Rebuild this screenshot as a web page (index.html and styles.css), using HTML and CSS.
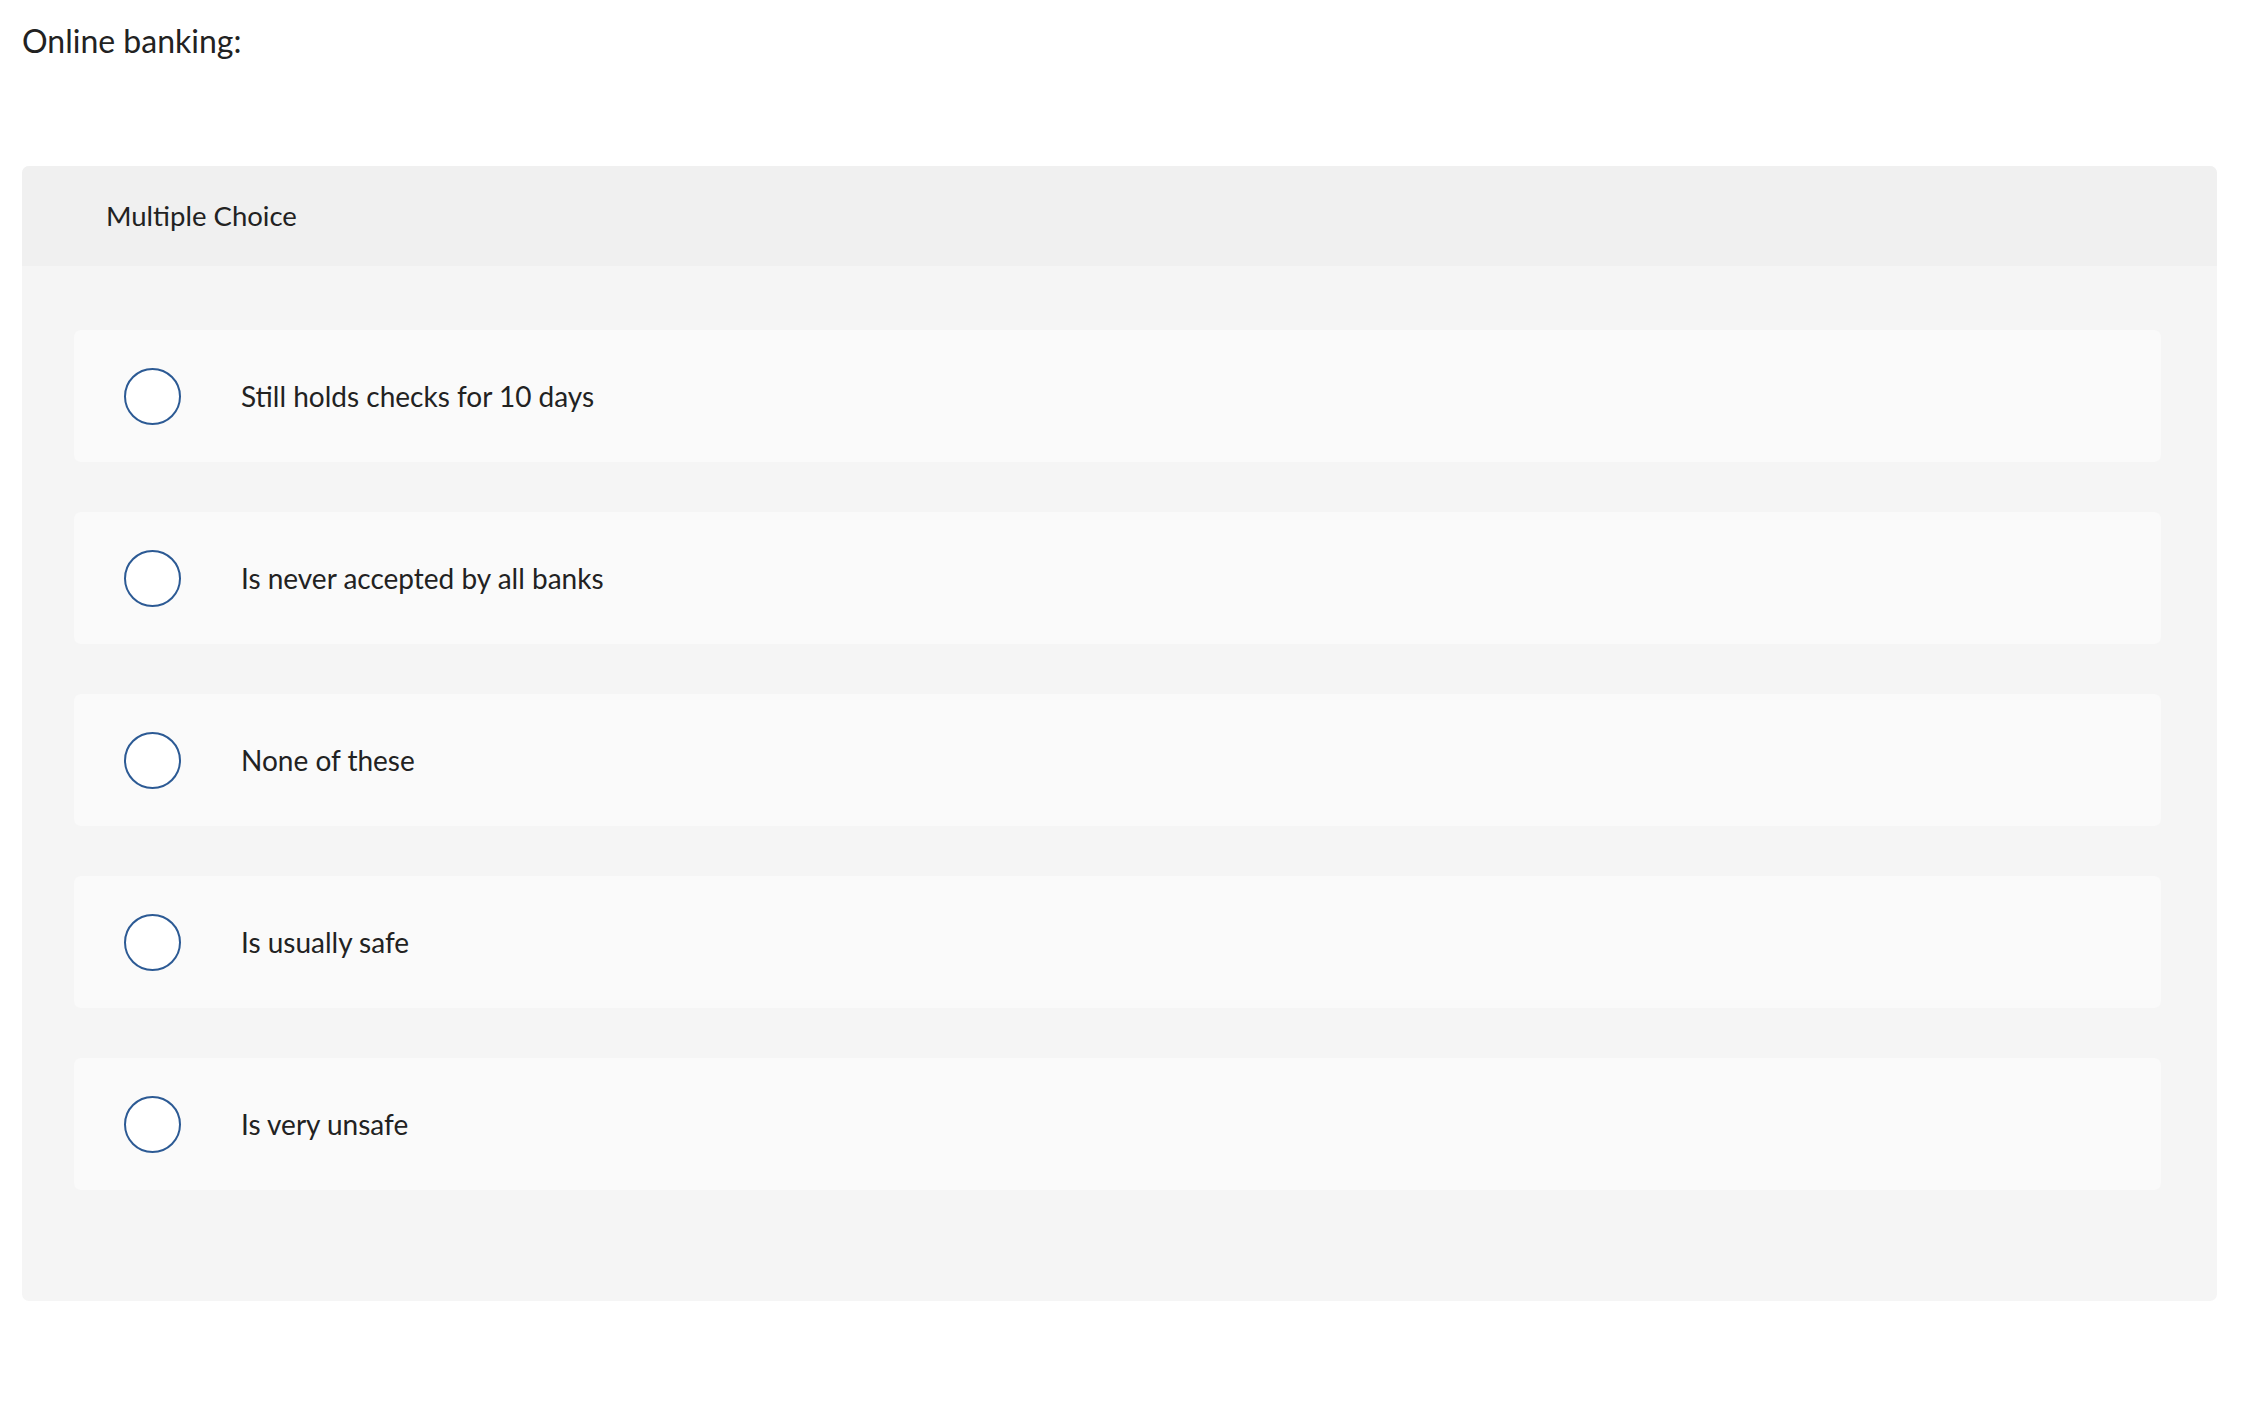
FILE: index.html
```html
<!DOCTYPE html>
<html lang="en">
<head>
<meta charset="utf-8">
<title>Online banking</title>
<link rel="stylesheet" href="styles.css">
</head>
<body>
<div class="page">
  <p class="prompt">Online banking:</p>
  <section class="question">
    <header class="q-head">Multiple Choice</header>
    <div class="q-body">
      <label class="option"><span class="radio"></span><span class="opt-text">Still holds checks for 10 days</span></label>
      <label class="option"><span class="radio"></span><span class="opt-text">Is never accepted by all banks</span></label>
      <label class="option"><span class="radio"></span><span class="opt-text">None of these</span></label>
      <label class="option"><span class="radio"></span><span class="opt-text">Is usually safe</span></label>
      <label class="option"><span class="radio"></span><span class="opt-text">Is very unsafe</span></label>
    </div>
  </section>
</div>
</body>
</html>
```

FILE: styles.css
```css
html, body {
  margin: 0;
  padding: 0;
  background: #ffffff;
}
body {
  font-family: "Lato", "Open Sans", "Liberation Sans", sans-serif;
  color: #222222;
}
.page {
  padding: 0 43px 0 22px;
}
.prompt {
  margin: 0;
  padding-top: 21px;
  height: 166px;
  box-sizing: border-box;
  font-size: 32px;
  line-height: 40px;
}
.question {
  background: #f5f5f5;
  border-radius: 7px;
  overflow: hidden;
  width: 2195px;
}
.q-head {
  background: #f0f0f0;
  height: 100px;
  box-sizing: border-box;
  padding-left: 84px;
  padding-top: 30px;
  font-size: 27.5px;
  line-height: 40px;
}
.q-body {
  display: flex;
  flex-direction: column;
  gap: 50px;
  padding: 64px 56px 111px 52px;
}
.option {
  display: flex;
  align-items: center;
  height: 132px;
  background: #fafafa;
  border-radius: 7px;
  padding-left: 50px;
  box-sizing: border-box;
}
.radio {
  position: relative;
  flex: none;
  width: 57px;
  height: 57px;
  box-sizing: border-box;
  border: 2.5px solid #2c5a94;
  border-radius: 50%;
  background: #ffffff;
  margin-top: 1px;
}
.radio::before {
  content: "";
  position: absolute;
  left: -4px;
  top: -3px;
  width: 57px;
  height: 57px;
  box-sizing: border-box;
  border: 2px solid #c8c8c8;
  border-right-color: transparent;
  border-bottom-color: transparent;
  border-left-color: transparent;
  border-radius: 50%;
  transform: rotate(-45deg);
  z-index: -1;
}
.opt-text {
  margin-left: 60px;
  font-size: 28px;
  line-height: 36px;
}
```
